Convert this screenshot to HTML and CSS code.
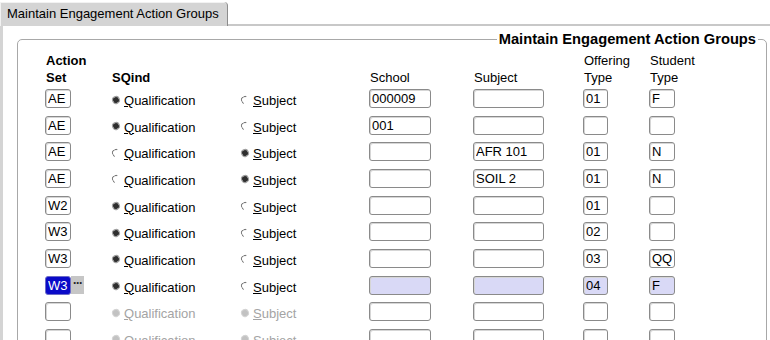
FILE: index.html
```html
<!DOCTYPE html>
<html lang="en">
<head>
    <meta charset="UTF-8">
    <title>Maintain Engagement Action Groups</title>
    <link rel="stylesheet" href="styles.css">
</head>
<body>
    <div class="tabs">
        <div class="tab">Maintain Engagement Action Groups</div>
        <div class="tab-rest"></div>
    </div>
    <div class="panel">
        <fieldset class="block">
            <legend>Maintain Engagement Action Groups</legend>

            <div class="grid head">
                <div class="hd">Action<br>Set</div>
                <div class="hd">SQind</div>
                <div></div>
                <div class="lbl">School</div>
                <div class="lbl">Subject</div>
                <div class="lbl">Offering<br>Type</div>
                <div class="lbl">Student<br>Type</div>
            </div>

            <div class="grid row">
                <div class="cell"><input class="fld set" value="AE" readonly></div>
                <label class="opt"><span class="radio on"></span><span><u>Q</u>ualification</span></label>
                <label class="opt"><span class="radio"></span><span><u>S</u>ubject</span></label>
                <div class="cell"><input class="fld school" value="000009" readonly></div>
                <div class="cell"><input class="fld subj" value="" readonly></div>
                <div class="cell"><input class="fld off" value="01" readonly></div>
                <div class="cell"><input class="fld stu" value="F" readonly></div>
            </div>
            <div class="grid row">
                <div class="cell"><input class="fld set" value="AE" readonly></div>
                <label class="opt"><span class="radio on"></span><span><u>Q</u>ualification</span></label>
                <label class="opt"><span class="radio"></span><span><u>S</u>ubject</span></label>
                <div class="cell"><input class="fld school" value="001" readonly></div>
                <div class="cell"><input class="fld subj" value="" readonly></div>
                <div class="cell"><input class="fld off" value="" readonly></div>
                <div class="cell"><input class="fld stu" value="" readonly></div>
            </div>
            <div class="grid row">
                <div class="cell"><input class="fld set" value="AE" readonly></div>
                <label class="opt"><span class="radio"></span><span><u>Q</u>ualification</span></label>
                <label class="opt"><span class="radio on"></span><span><u>S</u>ubject</span></label>
                <div class="cell"><input class="fld school" value="" readonly></div>
                <div class="cell"><input class="fld subj" value="AFR 101" readonly></div>
                <div class="cell"><input class="fld off" value="01" readonly></div>
                <div class="cell"><input class="fld stu" value="N" readonly></div>
            </div>
            <div class="grid row">
                <div class="cell"><input class="fld set" value="AE" readonly></div>
                <label class="opt"><span class="radio"></span><span><u>Q</u>ualification</span></label>
                <label class="opt"><span class="radio on"></span><span><u>S</u>ubject</span></label>
                <div class="cell"><input class="fld school" value="" readonly></div>
                <div class="cell"><input class="fld subj" value="SOIL 2" readonly></div>
                <div class="cell"><input class="fld off" value="01" readonly></div>
                <div class="cell"><input class="fld stu" value="N" readonly></div>
            </div>
            <div class="grid row">
                <div class="cell"><input class="fld set" value="W2" readonly></div>
                <label class="opt"><span class="radio on"></span><span><u>Q</u>ualification</span></label>
                <label class="opt"><span class="radio"></span><span><u>S</u>ubject</span></label>
                <div class="cell"><input class="fld school" value="" readonly></div>
                <div class="cell"><input class="fld subj" value="" readonly></div>
                <div class="cell"><input class="fld off" value="01" readonly></div>
                <div class="cell"><input class="fld stu" value="" readonly></div>
            </div>
            <div class="grid row">
                <div class="cell"><input class="fld set" value="W3" readonly></div>
                <label class="opt"><span class="radio on"></span><span><u>Q</u>ualification</span></label>
                <label class="opt"><span class="radio"></span><span><u>S</u>ubject</span></label>
                <div class="cell"><input class="fld school" value="" readonly></div>
                <div class="cell"><input class="fld subj" value="" readonly></div>
                <div class="cell"><input class="fld off" value="02" readonly></div>
                <div class="cell"><input class="fld stu" value="" readonly></div>
            </div>
            <div class="grid row">
                <div class="cell"><input class="fld set" value="W3" readonly></div>
                <label class="opt"><span class="radio on"></span><span><u>Q</u>ualification</span></label>
                <label class="opt"><span class="radio"></span><span><u>S</u>ubject</span></label>
                <div class="cell"><input class="fld school" value="" readonly></div>
                <div class="cell"><input class="fld subj" value="" readonly></div>
                <div class="cell"><input class="fld off" value="03" readonly></div>
                <div class="cell"><input class="fld stu" value="QQ" readonly></div>
            </div>
            <div class="grid row current">
                <div class="cell"><input class="fld set picked" value="W3" readonly><span class="lov">···</span></div>
                <label class="opt"><span class="radio on"></span><span><u>Q</u>ualification</span></label>
                <label class="opt"><span class="radio"></span><span><u>S</u>ubject</span></label>
                <div class="cell"><input class="fld school" value="" readonly></div>
                <div class="cell"><input class="fld subj" value="" readonly></div>
                <div class="cell"><input class="fld off" value="04" readonly></div>
                <div class="cell"><input class="fld stu" value="F" readonly></div>
            </div>
            <div class="grid row off-row">
                <div class="cell"><input class="fld set" value="" readonly></div>
                <label class="opt"><span class="radio dis"></span><span><u>Q</u>ualification</span></label>
                <label class="opt"><span class="radio dis"></span><span><u>S</u>ubject</span></label>
                <div class="cell"><input class="fld school" value="" readonly></div>
                <div class="cell"><input class="fld subj" value="" readonly></div>
                <div class="cell"><input class="fld off" value="" readonly></div>
                <div class="cell"><input class="fld stu" value="" readonly></div>
            </div>
            <div class="grid row off-row">
                <div class="cell"><input class="fld set" value="" readonly></div>
                <label class="opt"><span class="radio dis"></span><span><u>Q</u>ualification</span></label>
                <label class="opt"><span class="radio dis"></span><span><u>S</u>ubject</span></label>
                <div class="cell"><input class="fld school" value="" readonly></div>
                <div class="cell"><input class="fld subj" value="" readonly></div>
                <div class="cell"><input class="fld off" value="" readonly></div>
                <div class="cell"><input class="fld stu" value="" readonly></div>
            </div>
        </fieldset>
    </div>
</body>
</html>
```

FILE: styles.css
```css
html, body {
    margin: 0;
    height: 100%;
    overflow: hidden;
    background: #fff;
    color: #000;
    font-family: "Liberation Sans", Arial, sans-serif;
    font-size: 13px;
}

.tabs {
    display: flex;
    height: 26px;
}

.tab {
    margin-top: 2px;
    height: 24px;
    box-sizing: border-box;
    padding: 1px 8px 0 7px;
    line-height: 22px;
    background: #d4d4d4;
    border-right: 1px solid #8c8c8c;
    border-top-right-radius: 4px;
    box-shadow: inset 1px 1px 0 #f2f2f2;
    white-space: nowrap;
}

.tab-rest {
    flex: 1;
    border-bottom: 2px solid #c8c8c8;
}

.panel {
    height: 400px;
    border-left: 3px solid #d4d4d4;
    overflow: hidden;
}

.block {
    margin: 5px 3px 0 14px;
    padding: 4px 0 10px 27px;
    border: 1px solid #a8a8a8;
    border-radius: 5px;
    min-width: 0;
}

.block legend {
    margin-left: auto;
    margin-right: 8px;
    padding: 0 2px;
    font-weight: bold;
    font-size: 14.7px;
    line-height: 17px;
}

.grid {
    display: grid;
    grid-template-columns: 66px 129px 129px 104px 110px 66px 1fr;
}

.head {
    height: 34px;
    align-items: end;
    line-height: 17px;
}

.hd {
    font-weight: bold;
    padding-left: 1px;
}

.lbl {
    padding-left: 1px;
}

.row {
    height: 26.67px;
    align-items: start;
}

.cell {
    display: flex;
    align-items: flex-start;
}

.fld {
    margin: 3px 0 0;
    height: 19px;
    box-sizing: border-box;
    padding: 0 2px;
    border: 1px solid #8a8a8a;
    border-radius: 3px;
    box-shadow: inset 1px 1px 0 #d6d6d6;
    background: #fff;
    color: #000;
    font: 13px/17px "Liberation Sans", Arial, sans-serif;
    outline: none;
}

.set { width: 26px; }
.school { width: 62px; }
.subj { width: 71px; }
.off { width: 25px; }
.stu { width: 26px; }

.current .fld {
    background: #d9d9f6;
}

.current .fld.picked {
    background: #0a0ac8;
    border-color: #6c6cc8;
    box-shadow: none;
    color: #fff;
}

.lov {
    margin-top: 3px;
    width: 13px;
    height: 18px;
    background: #c6c6c6;
    color: #222;
    font-weight: bold;
    font-size: 12px;
    line-height: 14px;
    text-align: center;
    letter-spacing: -1px;
}

.opt {
    margin-top: 6px;
    display: flex;
    align-items: center;
    gap: 4px;
    line-height: 17px;
}

.radio {
    width: 8px;
    height: 8px;
    margin: 0 0 2px 1px;
    box-sizing: border-box;
    border-radius: 50%;
    border: 1px solid transparent;
    border-left-color: #7a7a7a;
    border-top-color: #7a7a7a;
    transform: rotate(-25deg);
}

.radio.on {
    border-color: #a0a0a0;
    background: radial-gradient(circle, #2e2e2e 55%, #5a5a5a 100%);
}

.radio.dis {
    border-color: #d4d4d4;
    background: #c2c2c2;
}

.off-row .opt {
    color: #a4a4a4;
}
```
